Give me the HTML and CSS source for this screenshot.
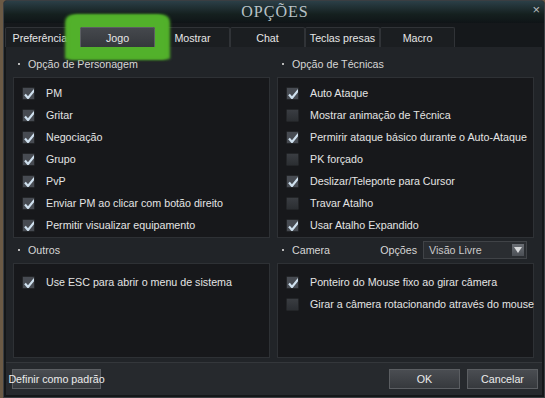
FILE: index.html
```html
<!DOCTYPE html>
<html lang="pt">
<head>
    <meta charset="UTF-8">
    <title>Opções</title>
    <link rel="stylesheet" href="styles.css">
</head>
<body>
    <div class="window">
        <div class="titlebar">
            <span class="title">OPÇÕES</span>
            <span class="close">&times;</span>
        </div>

        <div class="tabs">
            <div class="tab">Preferências</div>
            <div class="tab active">Jogo</div>
            <div class="tab">Mostrar</div>
            <div class="tab">Chat</div>
            <div class="tab">Teclas presas</div>
            <div class="tab">Macro</div>
        </div>

        <div class="content">
            <!-- left column -->
            <div class="column">
                <div class="section-head"><span class="bullet"></span>Opção de Personagem</div>
                <div class="box box-tall">
                    <div class="option"><span class="check on"></span>PM</div>
                    <div class="option"><span class="check on"></span>Gritar</div>
                    <div class="option"><span class="check on"></span>Negociação</div>
                    <div class="option"><span class="check on"></span>Grupo</div>
                    <div class="option"><span class="check on"></span>PvP</div>
                    <div class="option"><span class="check on"></span>Enviar PM ao clicar com botão direito</div>
                    <div class="option"><span class="check on"></span>Permitir visualizar equipamento</div>
                </div>
                <div class="section-head second"><span class="bullet"></span>Outros</div>
                <div class="box box-short">
                    <div class="option"><span class="check on"></span>Use ESC para abrir o menu de sistema</div>
                </div>
            </div>

            <!-- right column -->
            <div class="column">
                <div class="section-head"><span class="bullet"></span>Opção de Técnicas</div>
                <div class="box box-tall">
                    <div class="option"><span class="check on"></span>Auto Ataque</div>
                    <div class="option"><span class="check"></span>Mostrar animação de Técnica</div>
                    <div class="option"><span class="check on"></span>Permirir ataque básico durante o Auto-Ataque</div>
                    <div class="option"><span class="check"></span>PK forçado</div>
                    <div class="option"><span class="check on"></span>Deslizar/Teleporte para Cursor</div>
                    <div class="option"><span class="check"></span>Travar Atalho</div>
                    <div class="option"><span class="check on"></span>Usar Atalho Expandido</div>
                </div>
                <div class="section-head second">
                    <span class="bullet"></span>Camera
                    <span class="select-label">Opções</span>
                    <div class="select">
                        <span>Visão Livre</span>
                        <span class="select-arrow">
                            <svg width="8" height="6" viewBox="0 0 8 6"><path d="M0 0H8L4 6Z" fill="#d8dadc"/></svg>
                        </span>
                    </div>
                </div>
                <div class="box box-short">
                    <div class="option"><span class="check on"></span>Ponteiro do Mouse fixo ao girar câmera</div>
                    <div class="option"><span class="check"></span>Girar a câmera rotacionando através do mouse</div>
                </div>
            </div>
        </div>

        <div class="footer">
            <button class="btn btn-default">Definir como padrão</button>
            <div class="footer-right">
                <button class="btn">OK</button>
                <button class="btn">Cancelar</button>
            </div>
        </div>
    </div>
</body>
</html>
```

FILE: styles.css
```css
/* Game options dialog */
body {
    margin: 0;
    padding: 0;
    background-color: #6b5a45;
    font-family: "Liberation Sans", Arial, sans-serif;
    font-size: 10.7px;
    color: #e4e4e4;
}

.window {
    height: 398px;
    box-sizing: border-box;
    margin-left: 3px;
    width: 542px;
    background-color: #141719;
    border: 1px solid #3a3e42;
    border-radius: 4px 4px 0 0;
    display: flex;
    flex-direction: column;
    overflow: hidden;
}

.titlebar {
    height: 22px;
    flex-shrink: 0;
    display: flex;
    align-items: center;
    justify-content: center;
    position: relative;
    background: linear-gradient(#2b3f47, #15201f 60%, #0f1417);
}

.title {
    font-family: "Liberation Serif", "Times New Roman", serif;
    font-size: 16px;
    letter-spacing: 1px;
    color: #b9c3c7;
    margin-left: 2px;
}

.close {
    position: absolute;
    right: 4px;
    top: 1px;
    font-size: 13px;
    color: #b8bcbe;
}

.tabs {
    height: 24px;
    flex-shrink: 0;
    display: flex;
    align-items: flex-end;
    padding-left: 1px;
    background-color: #15181b;
}

.tab {
    width: 73px;
    height: 19px;
    display: flex;
    align-items: center;
    justify-content: center;
    background-color: #1b1e21;
    border: 1px solid #303337;
    border-bottom: none;
    border-radius: 2px 2px 0 0;
    color: #e6e6e6;
    white-space: nowrap;
}

.tab.active {
    position: relative;
    z-index: 1;
    background: linear-gradient(#45484d, #35383c);
    border-color: #5c5f63;
    box-shadow: 0 0 3px 12px #52b12b, -3px 0 3px 12px #52b12b, 3px 0 3px 12px #52b12b;
}

.content {
    flex: 1;
    display: grid;
    grid-template-columns: 257px 257px;
    column-gap: 7px;
    padding: 8px 6px 0 7px;
    margin: 0 2px;
    background-color: #212428;
    border-bottom: 1px solid #34373b;
}

.section-head {
    height: 18px;
    display: flex;
    align-items: center;
    margin-bottom: 4px;
    color: #d6d6d6;
    padding-left: 5px;
    white-space: nowrap;
}

.section-head.second {
    margin-top: 3px;
}

.bullet {
    width: 2px;
    height: 2px;
    background-color: #b8b8b8;
    margin-right: 8px;
}

.box {
    box-sizing: border-box;
    background-color: #17181b;
    border: 1px solid #2e3135;
    padding: 4px 0 0 8px;
}

.box-tall {
    height: 161px;
}

.box-short {
    height: 95px;
    padding-top: 7px;
}

.option {
    height: 22px;
    display: flex;
    align-items: center;
    white-space: nowrap;
}

.check {
    width: 13px;
    height: 13px;
    margin-right: 11px;
    flex-shrink: 0;
    border-radius: 1px;
    background: linear-gradient(#3a3d42, #2b2e32);
    border: 1px solid #232528;
    box-sizing: border-box;
}

.check.on {
    background-image: url("data:image/svg+xml,%3Csvg xmlns='http://www.w3.org/2000/svg' width='13' height='13' viewBox='0 0 13 13'%3E%3Crect width='13' height='13' fill='%23474b52'/%3E%3Cpath d='M2 6.5L5 10L11.5 2' stroke='%23cfe0ee' stroke-width='2.2' fill='none'/%3E%3C/svg%3E");
}

.select-label {
    margin-left: auto;
    margin-right: 6px;
}

.select {
    width: 104px;
    height: 18px;
    margin-right: 7px;
    box-sizing: border-box;
    display: flex;
    align-items: center;
    justify-content: space-between;
    padding: 0 2px 0 5px;
    background-color: #2a2d31;
    border: 1px solid #404347;
    color: #cacaca;
}

.select-arrow {
    width: 12px;
    height: 12px;
    display: flex;
    align-items: center;
    justify-content: center;
    background: linear-gradient(#6a6e74, #4b4f55);
}

.footer {
    height: 32px;
    flex-shrink: 0;
    display: flex;
    align-items: center;
    justify-content: space-between;
    padding: 0 4px 0 6px;
    margin: 0 2px 2px;
    background-color: #26292d;
}

.footer-right {
    display: flex;
    gap: 7px;
}

.btn {
    width: 71px;
    height: 20px;
    font-family: "Liberation Sans", Arial, sans-serif;
    font-size: 10.7px;
    color: #ececec;
    background: linear-gradient(#4a4d52, #36393d);
    border: 1px solid #5b5e62;
    display: flex;
    align-items: center;
    justify-content: center;
    padding: 0;
    white-space: nowrap;
}

.btn-default {
    width: 89px;
}
```
